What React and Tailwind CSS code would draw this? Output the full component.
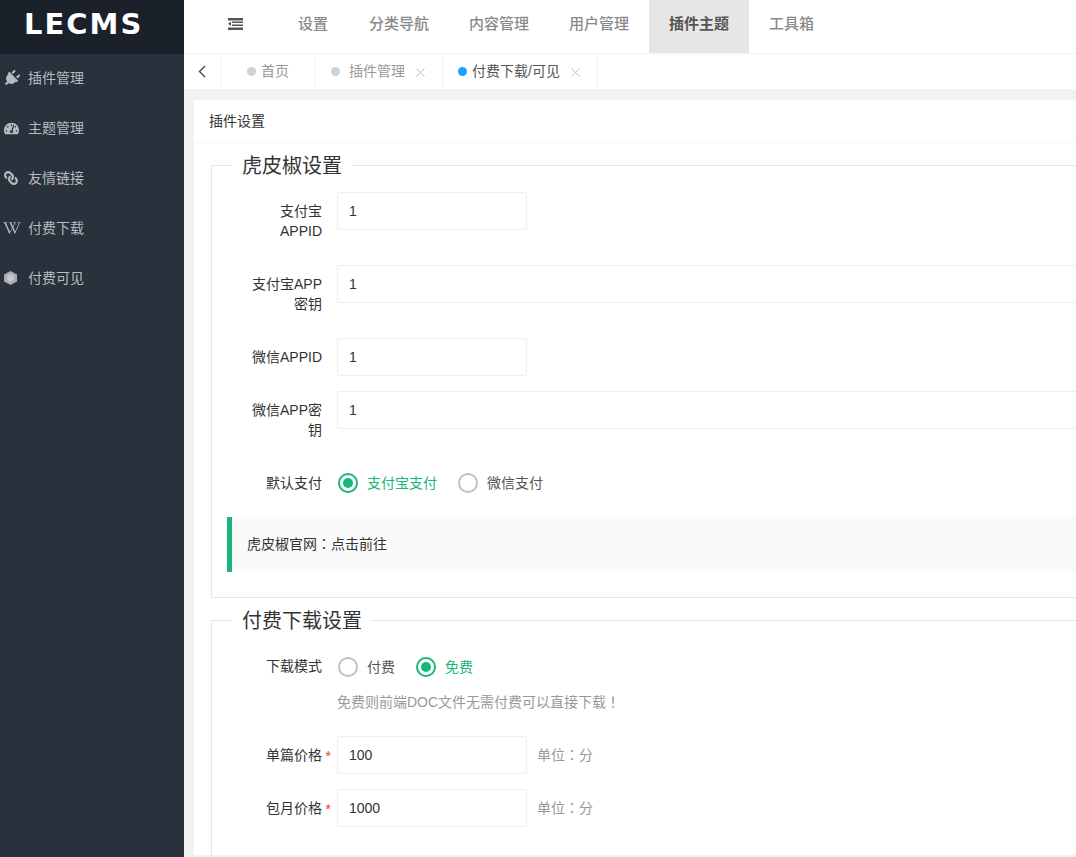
import { FaPlug, FaTachometerAlt, FaLink, FaWikipediaW } from "react-icons/fa";

const sideItems = [
  { label: "插件管理", icon: <FaPlug className="w-[17px] h-[17px] rotate-45 -ml-[1px]" /> },
  { label: "主题管理", icon: <FaTachometerAlt className="w-[15px] h-[15px]" /> },
  { label: "友情链接", icon: <FaLink className="w-[14px] h-[14px] -scale-x-100" /> },
  { label: "付费下载", icon: <FaWikipediaW className="w-[18px] h-[18px] -ml-[1px]" /> },
  {
    label: "付费可见",
    icon: (
      <svg width="13" height="14" viewBox="0 0 13 14">
        <path d="M6.5 0 L13 3.5 V10.5 L6.5 14 L0 10.5 V3.5 Z" fill="#a9acb0" />
        <path d="M6.5 3 L10 5 V9 L6.5 11 L3 9 V5 Z" fill="#c4c6c9" />
      </svg>
    ),
  },
];

const navItems = ["分类导航", "内容管理", "用户管理"];

const Punct = ({ children }) => <span className="leading-none font-['Noto_Sans_CJK_TC',sans-serif]">{children}</span>;

const Field = ({ label, star, value, wide, aux }) => (
  <div className="flex mb-[15px]">
    <label className="relative w-[125px] shrink-0 py-[9px] pl-[30px] pr-[15px] text-right leading-[20px] text-[#333]">
      {label}
      {star && <span className="absolute right-[6px] top-[10px] text-[#e53935]">*</span>}
    </label>
    <input
      readOnly
      value={value}
      className={`h-[38px] ${wide ? "w-[880px]" : "w-[190px]"} border border-[#eee] rounded-[2px] pl-[11px] text-[14px] text-[#333] outline-none`}
    />
    {aux && (
      <span className="ml-[10px] h-[38px] leading-[38px] text-[#999]">
        单位<Punct>：</Punct>分
      </span>
    )}
  </div>
);

const Radio = ({ label, on }) => (
  <div className={`flex items-center mr-[20px] ${on ? "text-[#16b777]" : "text-[#555]"}`}>
    <span className={`w-[20px] h-[20px] ml-[1px] mr-[9px] rounded-full border-2 flex items-center justify-center ${on ? "border-[#16b777]" : "border-[#c2c2c2]"}`}>
      {on && <span className="w-[10px] h-[10px] rounded-full bg-[#16b777]" />}
    </span>
    <span className="pt-[1px]">{label}</span>
  </div>
);

const RadioRow = ({ label, tight, children }) => (
  <div className="flex">
    <label className={`w-[125px] shrink-0 ${tight ? "pt-[8px]" : "pt-[9px]"} px-[15px] text-right leading-[20px] text-[#333]`}>{label}</label>
    <div className="flex h-[38px]">{children}</div>
  </div>
);

const Legend = ({ children }) => (
  <legend className="ml-[20px] px-[10px] text-[20px] leading-[30px] text-[#333]">
    <span className="relative top-[1px]">{children}</span>
  </legend>
);

const Tab = ({ label, active, close, className, dotClass }) => (
  <div className={`flex items-center h-full border-r border-[#f2f2f2] ${className}`}>
    <span className={`w-[9px] h-[9px] rounded-full ${dotClass} ${active ? "bg-[#1e9fff]" : "bg-[#d2d2d2]"}`} />
    <span className={active ? "text-[#555]" : "text-[#999]"}>{label}</span>
    {close && (
      <svg className="ml-[11px] mt-[2px]" width="9" height="9" viewBox="0 0 9 9" stroke="#bdbdbd" strokeWidth="1">
        <path d="M0.5 0.5 L8.5 8.5 M8.5 0.5 L0.5 8.5" />
      </svg>
    )}
  </div>
);

const App = () => {
  return (
    <div className="flex h-[857px] w-[1076px] overflow-hidden bg-white text-[14px] font-['Liberation_Sans','Noto_Sans_CJK_SC',sans-serif]">
      <aside className="w-[184px] shrink-0 bg-[#28313c] text-[#b8babd]">
        <div className="h-[54px] bg-[#1a212b] pl-[24px] pb-[6px] flex items-center">
          <span className="font-['DejaVu_Sans',sans-serif] font-bold text-[29px] leading-none tracking-[2px] text-white">LECMS</span>
        </div>
        {sideItems.map((item) => (
          <div key={item.label} className="flex items-center h-[50px] pl-[4px] pb-[2px]">
            <span className="w-[24px] flex items-center">{item.icon}</span>
            {item.label}
          </div>
        ))}
      </aside>

      <main className="flex-1 min-w-0 flex flex-col overflow-hidden">
        <header className="h-[54px] shrink-0 flex items-start border-b border-[#f2f2f2] text-[15px] leading-[47px] text-[#8a8a8a] font-medium">
          <div className="w-[94px] h-[47px] flex items-center justify-center pl-[8px]">
            <svg width="15" height="12" viewBox="0 0 15 12" fill="#555">
              <rect x="0" y="0" width="15" height="2.5" />
              <rect x="4" y="3.5" width="11" height="1.5" />
              <rect x="4" y="6.5" width="11" height="1.5" />
              <rect x="0" y="9.5" width="15" height="2.5" />
              <path d="M0 5.8 L3 3.6 V8 Z" />
            </svg>
          </div>
          <div className="w-[71px] pl-[20px]">设置</div>
          {navItems.map((n) => (
            <div key={n} className="w-[100px] pl-[20px]">{n}</div>
          ))}
          <div className="w-[100px] h-full bg-[#e6e6e6] pl-[20px] text-[#555] font-bold">插件主题</div>
          <div className="pl-[20px]">工具箱</div>
        </header>

        <div className="h-[35px] shrink-0 flex">
          <div className="w-[37px] h-full flex items-center justify-center border-r border-[#f2f2f2]">
            <svg width="8" height="13" viewBox="0 0 8 13" fill="none" stroke="#444" strokeWidth="1.4">
              <path d="M7 1 L1.5 6.5 L7 12" />
            </svg>
          </div>
          <Tab label="首页" className="w-[95px] pl-[26px]" dotClass="mr-[5px]" />
          <Tab label="插件管理" close className="w-[127px] pl-[15px]" dotClass="mr-[9px]" />
          <Tab label="付费下载/可见" active close className="w-[155px] pl-[15px]" dotClass="mr-[5px]" />
        </div>

        <div className="flex-1 bg-[#f2f2f2] pl-[10px] pt-[11px] overflow-hidden">
          <div className="w-[1100px] h-[755px] bg-white">
            <div className="h-[43px] border-b border-[#f6f6f6] pl-[15px] leading-[42px] text-[#333]">插件设置</div>
            <div className="pl-[17px] pt-[7px]">
              <fieldset className="border border-[#e6e6e6] pt-[12px] pb-[25px]">
                <Legend>虎皮椒设置</Legend>
                <Field label="支付宝APPID" value="1" />
                <Field label="支付宝APP密钥" value="1" wide />
                <Field label="微信APPID" value="1" />
                <Field label="微信APP密钥" value="1" wide />
                <div className="mb-[15px]">
                  <RadioRow label="默认支付">
                    <Radio label="支付宝支付" on />
                    <Radio label="微信支付" />
                  </RadioRow>
                </div>
                <div className="ml-[15px] border-l-[5px] border-[#16b777] bg-[#fafafa] h-[55px] pl-[15px] leading-[55px] text-[#333]">
                  虎皮椒官网<Punct>：</Punct>点击前往
                </div>
              </fieldset>

              <fieldset className="mt-[7px] border border-[#e6e6e6] pt-[13px] pb-[40px]">
                <Legend>付费下载设置</Legend>
                <RadioRow label="下载模式" tight>
                  <Radio label="付费" />
                  <Radio label="免费" on />
                </RadioRow>
                <div className="pl-[125px] mt-[6px] mb-[24px] h-[20px] leading-[20px] text-[#999]">
                  免费则前端DOC文件无需付费可以直接下载<Punct>！</Punct>
                </div>
                <Field label="单篇价格" star value="100" aux />
                <Field label="包月价格" star value="1000" aux />
              </fieldset>
            </div>
          </div>
        </div>
      </main>
    </div>
  );
};

export default App;
